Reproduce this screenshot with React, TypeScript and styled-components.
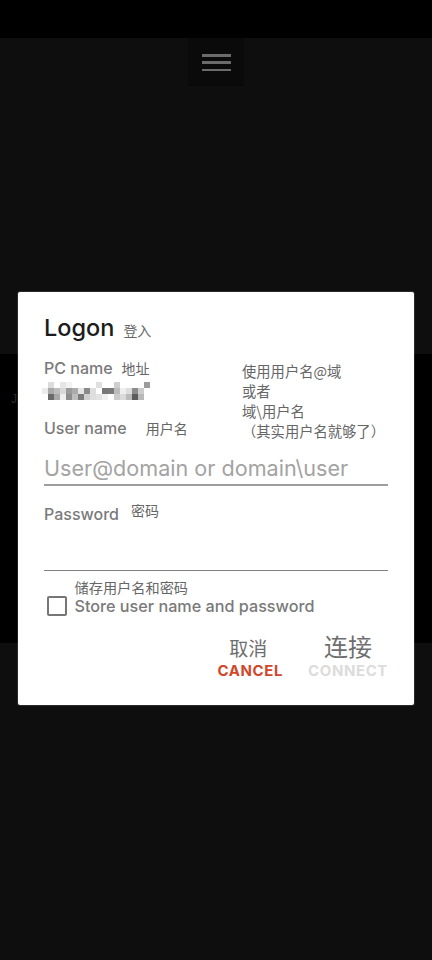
import React from "react";
import styled, { createGlobalStyle } from "styled-components";

const GlobalStyle = createGlobalStyle`
  html, body { margin: 0; padding: 0; background: #0e0e0e; }
  body { font-family: Inter, "Noto Sans CJK SC", sans-serif; }
  * { box-sizing: border-box; }
`;

const CJK = `Inter, "Noto Sans CJK SC", sans-serif`;

const Screen = styled.div`
  position: relative;
  width: 432px;
  height: 960px;
  background: #0e0e0e;
  display: flex;
  flex-direction: column;
  overflow: hidden;
`;

const StatusBar = styled.div`
  height: 38px;
  background: #000;
  flex: none;
`;

const Toolbar = styled.div`
  display: flex;
  justify-content: center;
  flex: none;
`;

const MenuButton = styled.button`
  width: 56px;
  height: 48px;
  border: 0;
  padding: 16px 0 0;
  background: #0a0a0a;
  display: flex;
  flex-direction: column;
  align-items: center;
  gap: 4.5px;
`;

const MenuBar = styled.span`
  display: block;
  width: 29px;
  height: 2.8px;
  background: #6b6b6b;
`;

const Band = styled.div`
  margin-top: 268px;
  height: 289px;
  background: #000;
  flex: none;
  padding: 36px 0 0 11px;
  line-height: 14px;
`;

const BandGlyph = styled.span`
  font-family: "Liberation Sans", sans-serif;
  font-size: 12px;
  color: #2a2a2a;
`;

const Dialog = styled.div`
  position: absolute;
  top: 292px;
  left: 18px;
  width: 396px;
  height: 413px;
  background: #fff;
  border-radius: 2px;
  box-shadow: 0 0 0 1px rgba(255, 255, 255, 0.12);
  padding: 21px 26px 0 26px;
  display: flex;
  flex-direction: column;
`;

const TitleRow = styled.div`
  display: flex;
  align-items: baseline;
  gap: 9px;
`;

const Title = styled.h1`
  margin: 0;
  font-family: ${CJK};
  font-size: 23.5px;
  line-height: 30px;
  font-weight: 500;
  color: #1c1c1c;
`;

const Hint = styled.span<{ $size?: number }>`
  font-family: "Noto Sans CJK SC", sans-serif;
  font-size: ${(p) => p.$size ?? 14}px;
  color: #666;
`;

const TopSection = styled.div`
  display: flex;
  margin-top: 15px;
`;

const LeftColumn = styled.div`
  width: 198px;
  display: flex;
  flex-direction: column;
`;

const LabelRow = styled.div<{ $gap: number; $top?: number; $align?: string }>`
  display: flex;
  align-items: ${(p) => p.$align ?? "baseline"};
  gap: ${(p) => p.$gap}px;
  margin-top: ${(p) => p.$top ?? 0}px;
`;

const Label = styled.span`
  font-family: ${CJK};
  font-size: 16px;
  line-height: 20px;
  font-weight: 500;
  color: #7a7a7a;
`;

const RaisedHint = styled.span`
  font-family: "Noto Sans CJK SC", sans-serif;
  font-size: 14px;
  line-height: 16px;
  color: #666;
  margin-top: -2px;
`;

const Pixelated = styled.div`
  display: grid;
  grid-template-columns: repeat(18, 6px);
  grid-auto-rows: 6px;
  margin: 4px 0 0 -2px;
`;

const Pixel = styled.span<{ $tone: string }>`
  background: ${(p) => p.$tone};
`;

const Note = styled.div`
  padding-top: 3px;
  font-family: "Noto Sans CJK SC", sans-serif;
  font-size: 14.3px;
  line-height: 20px;
  color: #666;
  display: flex;
  flex-direction: column;
`;

const TextInput = styled.input<{ $size: number; $line: number; $color: string; $height: number; $top: number }>`
  display: block;
  width: 100%;
  margin-top: ${(p) => p.$top}px;
  height: ${(p) => p.$height}px;
  border: 0;
  border-bottom: ${(p) => p.$line}px solid ${(p) => p.$color};
  padding: 0 0 3px 0;
  outline: none;
  background: transparent;
  font-family: ${CJK};
  font-size: ${(p) => p.$size}px;
  line-height: 26px;
  color: #333;
  &::placeholder {
    color: #a3a3a3;
  }
`;

const CheckRow = styled.label`
  display: flex;
  align-items: flex-end;
  gap: 8px;
  margin-top: 7px;
`;

const Checkbox = styled.span`
  width: 19.5px;
  height: 19.5px;
  margin: 0 0 0.5px 3px;
  border: 2px solid #767676;
  border-radius: 2px;
  flex: none;
`;

const CheckText = styled.div`
  display: flex;
  flex-direction: column;
`;

const CheckHint = styled.span`
  font-family: "Noto Sans CJK SC", sans-serif;
  font-size: 14.2px;
  line-height: 18px;
  color: #666;
`;

const CheckLabel = styled.span`
  font-family: ${CJK};
  font-size: 16.2px;
  line-height: 20px;
  font-weight: 500;
  color: #7a7a7a;
`;

const Actions = styled.div`
  display: flex;
  justify-content: flex-end;
  align-items: flex-end;
  gap: 25px;
  margin-top: 16px;
`;

const ActionButton = styled.button`
  border: 0;
  padding: 0;
  background: transparent;
  display: flex;
  flex-direction: column;
  align-items: center;
`;

const ActionHint = styled.span<{ $size: number; $line: number; $shift?: number }>`
  font-family: "Noto Sans CJK SC", sans-serif;
  font-size: ${(p) => p.$size}px;
  line-height: ${(p) => p.$line}px;
  margin-right: ${(p) => p.$shift ?? 0}px;
  color: #6e6e6e;
`;

const ActionLabel = styled.span<{ $color: string }>`
  margin-top: 2px;
  font-family: ${CJK};
  font-size: 15px;
  line-height: 18px;
  font-weight: 700;
  letter-spacing: 0.6px;
  color: ${(p) => p.$color};
`;

const W = "#ffffff";
const pixelRows: string[][] = [
  [W, "#dcdcdc", W, "#e6e6e6", "#f2f2f2", W, W, W, W, "#e0e0e0", W, W, "#cfcfcf", W, W, W, W, "#9c9c9c"],
  ["#ebebeb", "#a9a9a9", "#bdbdbd", "#d8d8d8", "#9a9a9a", "#ababab", "#e4e4e4", "#8a8a8a", "#dedede", W, "#777777", "#7a7a7a", "#bcbcbc", "#eeeeee", "#dddddd", "#8c8c8c", "#cccccc", W],
  [W, "#6a6a6a", "#a8a8a8", "#eeeeee", "#8c8c8c", "#bdbdbd", "#7b7b7b", "#cfcfcf", "#dedede", "#e3e3e3", "#f0f0f0", W, "#cbcbcb", "#dadada", "#bbbbbb", "#5c5c5c", "#b9b9b9", W],
];

export default function App() {
  return (
    <>
      <GlobalStyle />
      <Screen>
        <StatusBar />
        <Toolbar>
          <MenuButton aria-label="Menu">
            <MenuBar />
            <MenuBar />
            <MenuBar />
          </MenuButton>
        </Toolbar>
        <Band>
          <BandGlyph>J</BandGlyph>
        </Band>

        <Dialog role="dialog">
          <TitleRow>
            <Title>Logon</Title>
            <Hint>登入</Hint>
          </TitleRow>

          <TopSection>
            <LeftColumn>
              <LabelRow $gap={9}>
                <Label>PC name</Label>
                <Hint>地址</Hint>
              </LabelRow>
              <Pixelated>
                {pixelRows.flatMap((row, r) =>
                  row.map((tone, c) => <Pixel key={`${r}-${c}`} $tone={tone} />)
                )}
              </Pixelated>
              <LabelRow $gap={19} $top={18}>
                <Label>User name</Label>
                <Hint>用户名</Hint>
              </LabelRow>
            </LeftColumn>
            <Note>
              <span>使用用户名@域</span>
              <span>或者</span>
              <span>域\用户名</span>
              <span>（其实用户名就够了）</span>
            </Note>
          </TopSection>

          <TextInput
            $size={21.6}
            $line={2}
            $color="#9e9e9e"
            $height={31}
            $top={14}
            placeholder="User@domain or domain\user"
          />

          <LabelRow $gap={12} $top={18} $align="flex-start">
            <Label>Password</Label>
            <RaisedHint>密码</RaisedHint>
          </LabelRow>

          <TextInput $size={16} $line={1} $color="#808080" $height={47} $top={0} type="password" />

          <CheckRow>
            <Checkbox />
            <CheckText>
              <CheckHint>储存用户名和密码</CheckHint>
              <CheckLabel>Store user name and password</CheckLabel>
            </CheckText>
          </CheckRow>

          <Actions>
            <ActionButton>
              <ActionHint $size={19} $line={24} $shift={4}>取消</ActionHint>
              <ActionLabel $color="#d0482a">CANCEL</ActionLabel>
            </ActionButton>
            <ActionButton>
              <ActionHint $size={24} $line={28}>连接</ActionHint>
              <ActionLabel $color="#dcdcdc">CONNECT</ActionLabel>
            </ActionButton>
          </Actions>
        </Dialog>
      </Screen>
    </>
  );
}
